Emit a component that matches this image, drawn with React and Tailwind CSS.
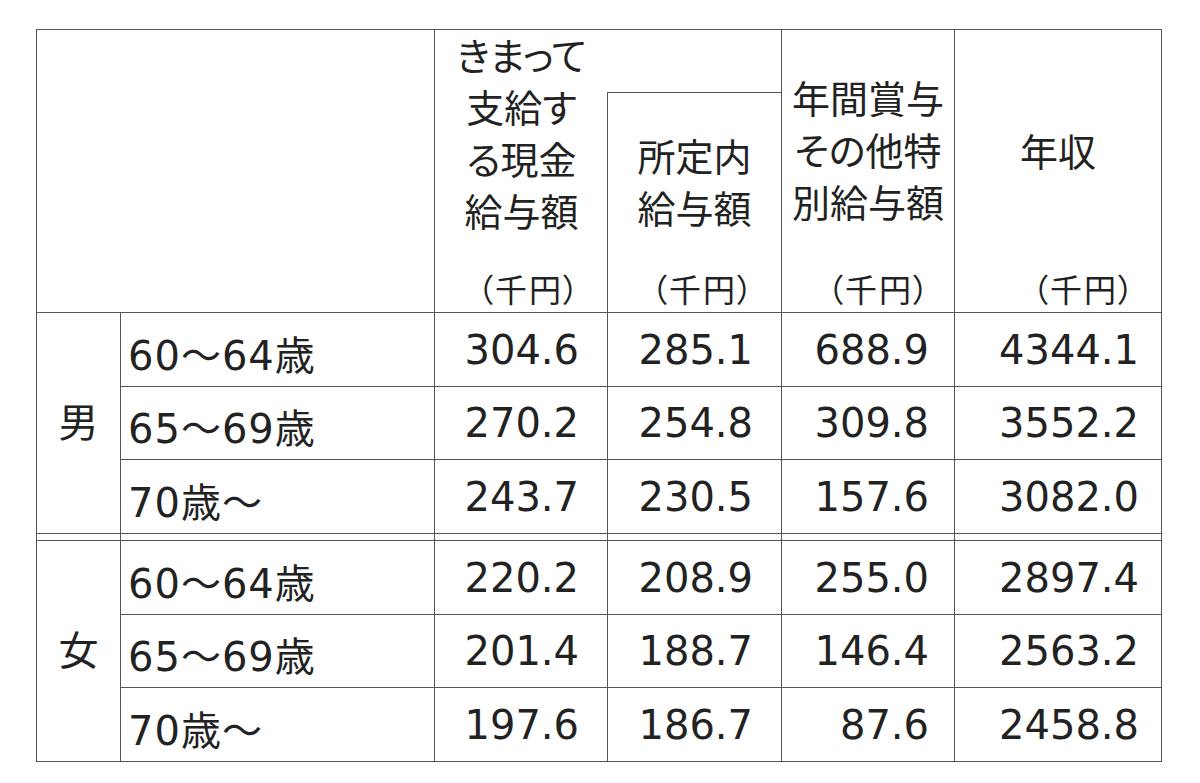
const rows = {
  male: [
    ["60～64歳", "304.6", "285.1", "688.9", "4344.1"],
    ["65～69歳", "270.2", "254.8", "309.8", "3552.2"],
    ["70歳～", "243.7", "230.5", "157.6", "3082.0"],
  ],
  female: [
    ["60～64歳", "220.2", "208.9", "255.0", "2897.4"],
    ["65～69歳", "201.4", "188.7", "146.4", "2563.2"],
    ["70歳～", "197.6", "186.7", "87.6", "2458.8"],
  ],
};

const numPad = ["pr-[28px]", "pr-[28px]", "pr-[25px]", "pr-[22px]"];

function Unit({ pad }) {
  return (
    <div className={"mt-auto mb-[1px] h-[40px] text-right text-[32px] leading-[40px] tracking-[2px] [font-feature-settings:'palt'] " + pad}>
      （千円）
    </div>
  );
}

function Group({ label, data, last }) {
  return (
    <>
      <div className={"row-span-3 border-r border-[#555] flex items-center justify-center text-[40px] leading-[40px] " + (last ? "" : "border-b")}>
        {label}
      </div>
      {data.map((r, i) => {
        const bottom = !(last && i === 2);
        return [
          <div key={"l" + i} className={"border-r border-[#555] flex items-center pl-[7px] pt-[12px] text-[40px] leading-[40px] tracking-[1px] whitespace-nowrap " + (bottom ? "border-b" : "")}>
            {r[0]}
          </div>,
          ...r.slice(1).map((v, j) => (
            <div
              key={"v" + i + j}
              className={"border-[#555] flex items-center justify-end text-[40px] leading-[40px] " + numPad[j] + " " + (j < 3 ? "border-r " : "") + (bottom ? "border-b" : "")}
            >
              {v}
            </div>
          )),
        ];
      })}
    </>
  );
}

export default function App() {
  return (
    <div className="w-[1200px] h-[783px] bg-white pt-[29px] pl-[36px] text-[#222] font-['DejaVu_Sans','Noto_Sans_CJK_JP',sans-serif] overflow-hidden">
      <div className="grid w-[1126px] border border-[#555] grid-cols-[84px_314px_173px_174px_173px_206px] grid-rows-[283px_74px_73px_74px_7px_74px_73px_73px]">
        {/* header */}
        <div className="col-span-2 border-r border-b border-[#555]"></div>
        <div className="border-b border-[#555] flex flex-col">
          <div className="pt-[1px] text-center text-[38px] leading-[52px] [font-feature-settings:'palt']">
            <div>きまって</div>
            <div>支給す</div>
            <div>る現金</div>
            <div>給与額</div>
          </div>
          <Unit pad="pr-[27px]" />
        </div>
        <div className="border-r border-b border-[#555] flex flex-col">
          <div className="mt-[62px] -ml-px flex-1 border-l border-t border-[#555] flex flex-col">
            <div className="flex-1 flex flex-col justify-center pt-[3px] text-center text-[38px] leading-[52px] [font-feature-settings:'palt']">
              <div>所定内</div>
              <div>給与額</div>
            </div>
            <Unit pad="pr-[26px]" />
          </div>
        </div>
        <div className="border-r border-b border-[#555] flex flex-col">
          <div className="flex-1 flex flex-col justify-center pt-[3px] text-center text-[38px] leading-[52px] [font-feature-settings:'palt']">
            <div>年間賞与</div>
            <div>その他特</div>
            <div>別給与額</div>
          </div>
          <Unit pad="pr-[23px]" />
        </div>
        <div className="border-b border-[#555] flex flex-col">
          <div className="flex-1 flex flex-col justify-center pt-[4px] text-center text-[38px] leading-[52px]">
            <div>年収</div>
          </div>
          <Unit pad="pr-[25px]" />
        </div>

        <Group label="男" data={rows.male} />

        {/* double line spacer */}
        <div className="border-r border-b border-[#555]"></div>
        <div className="border-r border-b border-[#555]"></div>
        <div className="border-r border-b border-[#555]"></div>
        <div className="border-r border-b border-[#555]"></div>
        <div className="border-r border-b border-[#555]"></div>
        <div className="border-b border-[#555]"></div>

        <Group label="女" data={rows.female} last />
      </div>
    </div>
  );
}
